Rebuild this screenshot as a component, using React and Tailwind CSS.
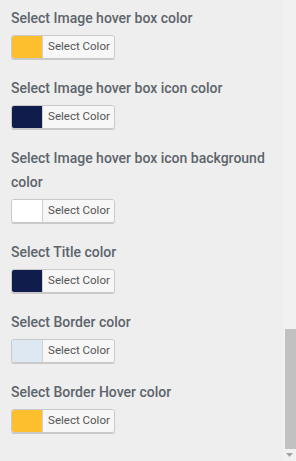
import React from 'react'

const fields = [
  { label: 'Select Image hover box color', color: '#fdbf2d' },
  { label: 'Select Image hover box icon color', color: '#0f1c4c' },
  { label: 'Select Image hover box icon background color', color: '#ffffff' },
  { label: 'Select Title color', color: '#0f1c4c' },
  { label: 'Select Border color', color: '#dde8f3' },
  { label: 'Select Border Hover color', color: '#fdbf2d' },
]

const ColorPicker = ({ color }) => (
  <div className="flex h-[24px] w-[104px] rounded-[3px] border border-[#c9c9c9] shadow-[0_1px_0_#c9c9c9] overflow-hidden">
    <div className="w-[31px] border-r border-[#d0d0d0]" style={{ backgroundColor: color }} />
    <div className="flex-1 flex items-center justify-center bg-[#f7f7f7] text-[11.5px] text-[#555] pb-[1px] pl-[1px]">
      Select Color
    </div>
  </div>
)

export default function App() {
  return (
    <div className="flex h-[461px] w-[296px] bg-[#eeeeee] overflow-hidden" style={{ fontFamily: 'Roboto, "Liberation Sans", sans-serif' }}>
      <div className="flex-1 pl-[11px] pt-[6px]">
        {fields.map((f, i) => (
          <div key={i} className="mb-[17px]">
            <div className="text-[14px] leading-[24px] font-medium text-[#5d646b] pr-[6px] mb-[5px]">{f.label}</div>
            <ColorPicker color={f.color} />
          </div>
        ))}
      </div>
      {/* scrollbar */}
      <div className="w-[13px] flex flex-col bg-[#f1f1f1]">
        <div className="flex-1" />
        <div className="h-[120px] ml-[2px] bg-[#c1c1c1]" />
        <div className="h-[12px] flex items-center justify-center">
          <svg width="7" height="4" viewBox="0 0 7 4"><path d="M0 0h7L3.5 4z" fill="#a3a3a3" /></svg>
        </div>
      </div>
    </div>
  )
}
